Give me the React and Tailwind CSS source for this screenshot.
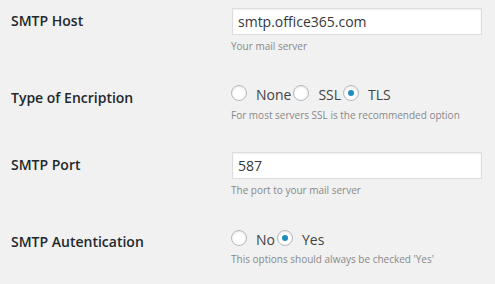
import React from "react";

const font = { fontFamily: '"Open Sans", "Noto Sans", sans-serif' };

function Radio({ checked }) {
  return (
    <span className="relative inline-block w-[16px] h-[16px] rounded-full border border-[#b4b9be] bg-white shadow-[inset_0_1px_2px_rgba(0,0,0,0.1)] shrink-0">
      {checked && (
        <span className="absolute left-[4px] top-[4px] w-[6px] h-[6px] rounded-full bg-[#1e8cbe]" />
      )}
    </span>
  );
}

function RadioGroup({ options, checked }) {
  return (
    <div className="flex items-center h-[16px]">
      {options.map((o, i) => (
        <label key={o} className={`flex items-center ${i > 0 ? "ml-[2px]" : ""}`}>
          <Radio checked={o === checked} />
          <span className="ml-[9px] text-[14px] leading-[20px] text-[#444] relative top-[2px]">{o}</span>
        </label>
      ))}
    </div>
  );
}

function Desc({ children, className = "" }) {
  return (
    <p className={`text-[10px] leading-[14px] text-[#888888] ${className}`}>{children}</p>
  );
}

function Label({ children, className = "" }) {
  return (
    <div className={`w-[220px] pl-[11px] text-[14px] leading-[20px] font-semibold text-[#23282d] ${className}`}>
      {children}
    </div>
  );
}

function Input({ value }) {
  return (
    <div className="w-[250px] h-[27px] border border-[#dddddd] bg-white shadow-[inset_0_1px_2px_rgba(0,0,0,0.07)] flex items-center px-[5px] text-[14px] leading-[20px] text-[#32373c]">
      {value}
    </div>
  );
}

export default function App() {
  return (
    <div className="w-[495px] h-[284px] bg-[#f1f1f1] overflow-hidden" style={font}>
      <div className="flex h-[72px]">
        <Label className="pt-[11px]">SMTP Host</Label>
        <div className="pl-[12px] pt-[8px]">
          <Input value="smtp.office365.com" />
          <Desc className="mt-[4px] -ml-[1px]">Your mail server</Desc>
        </div>
      </div>
      <div className="flex h-[72px]">
        <Label className="pt-[16px]">Type of Encription</Label>
        <div className="pl-[11px] pt-[13px]">
          <RadioGroup options={["None", "SSL", "TLS"]} checked="TLS" />
          <Desc className="mt-[7px]">For most servers SSL is the recommended option</Desc>
        </div>
      </div>
      <div className="flex h-[72px]">
        <Label className="pt-[11px]">SMTP Port</Label>
        <div className="pl-[12px] pt-[8px]">
          <Input value="587" />
          <Desc className="mt-[4px] -ml-[1px]">The port to your mail server</Desc>
        </div>
      </div>
      <div className="flex h-[68px]">
        <Label className="pt-[16px]">SMTP Autentication</Label>
        <div className="pl-[11px] pt-[14px]">
          <RadioGroup options={["No", "Yes"]} checked="Yes" />
          <Desc className="mt-[6px]">This options should always be checked 'Yes'</Desc>
        </div>
      </div>
    </div>
  );
}
